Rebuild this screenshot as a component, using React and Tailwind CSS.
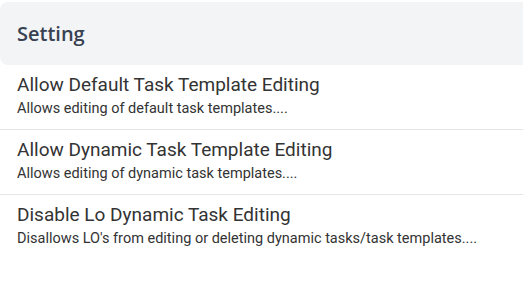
export default function App() {
  const rows = [
    ["Allow Default Task Template Editing", "Allows editing of default task templates...."],
    ["Allow Dynamic Task Template Editing", "Allows editing of dynamic task templates...."],
    ["Disable Lo Dynamic Task Editing", "Disallows LO's from editing or deleting dynamic tasks/task templates...."],
  ];
  return (
    <div className="w-[523px] h-[286px] bg-white pt-[2px]">
      <div className="h-[63px] bg-[#f3f4f6] rounded-l-[8px] flex items-center px-[17px]">
        <span className="text-[20px] font-semibold text-[#374151]" style={{ fontFamily: '"Open Sans", sans-serif' }}>Setting</span>
      </div>
      <div style={{ fontFamily: 'Roboto, sans-serif' }}>
        {rows.map(([t, s], i) => (
          <div key={i} className={`h-[65px] px-[17px] pt-[8px] ${i < 2 ? "border-b border-[#e5e5e5]" : ""}`}>
            <div className="text-[19px] leading-[24px] text-[#333333]">{t}</div>
            <div className="mt-[3px] text-[14.5px] leading-[18px] text-[#333333]">{s}</div>
          </div>
        ))}
      </div>
    </div>
  );
}
